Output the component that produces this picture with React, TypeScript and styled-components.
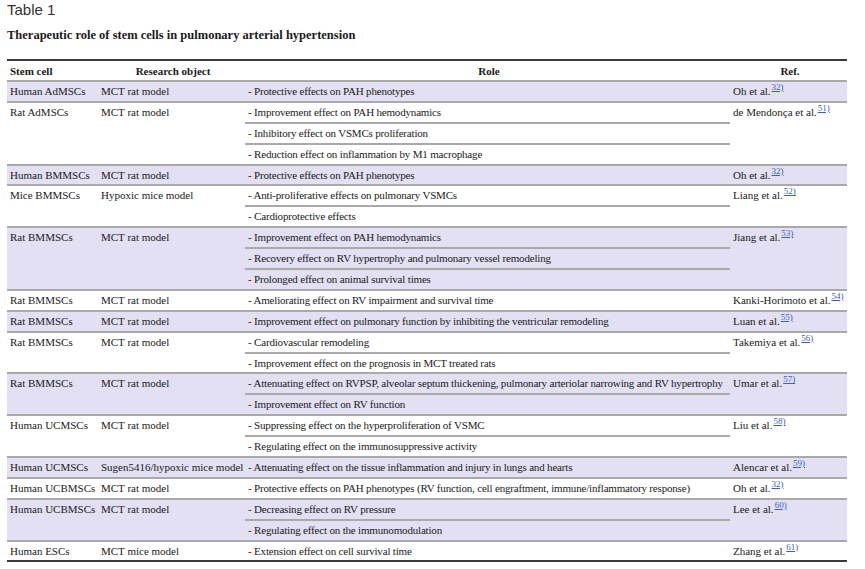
import React from "react";
import styled, { createGlobalStyle } from "styled-components";

const Global = createGlobalStyle`
  html, body { margin: 0; padding: 0; background: #fff; }
  body { font-family: "Liberation Serif", "Times New Roman", serif; color: #1a1a1a; }
`;

const SERIF = `"Liberation Serif", "Times New Roman", serif`;

const Page = styled.div`
  width: 865px;
  height: 569px;
  box-sizing: border-box;
  padding: 1px 18px 0 7px;
  overflow: hidden;
  font-family: ${SERIF};
`;

const Title = styled.h1`
  margin: 0;
  font-family: "Liberation Sans", Arial, sans-serif;
  font-weight: normal;
  font-size: 15px;
  line-height: 17px;
  color: #333;
`;

const Caption = styled.h2`
  margin: 10px 0 0 0;
  font-family: ${SERIF};
  font-weight: bold;
  font-size: 12.5px;
  line-height: 15px;
  color: #1a1a1a;
`;

const Table = styled.div`
  margin-top: 16px;
  width: 840px;
  border-top: 2px solid #3a3a3a;
  border-bottom: 2px solid #3a3a3a;
  font-family: ${SERIF};
  font-size: 11px;
  color: #1a1a1a;
`;

const COLS = "91px 147px 485px 1fr";

const HeadRow = styled.div`
  display: grid;
  grid-template-columns: ${COLS};
  height: 19px;
  border-bottom: 2px solid #a9a9a9;
  font-weight: bold;
  align-items: center;
`;

const HeadCell = styled.div<{ $align?: string }>`
  padding-left: 3px;
  text-align: ${(p) => p.$align || "left"};
  white-space: nowrap;
  font-family: ${SERIF};
`;

const Group = styled.div<{ $shaded: boolean; $last: boolean }>`
  display: grid;
  grid-template-columns: ${COLS};
  background: ${(p) => (p.$shaded ? "#e2e0f2" : "#ffffff")};
  border-bottom: ${(p) => (p.$last ? "none" : "2px solid #a9a9a9")};
`;

const Cell = styled.div`
  padding-left: 3px;
  height: 18.9px;
  line-height: 18.9px;
  white-space: nowrap;
  font-family: ${SERIF};
`;

const RoleList = styled.div`
  display: flex;
  flex-direction: column;
`;

const RoleItem = styled.div`
  padding-left: 3px;
  height: 18.9px;
  line-height: 18.9px;
  white-space: nowrap;
  letter-spacing: -0.18px;
  font-family: ${SERIF};
  &:not(:last-child) {
    border-bottom: 2px solid #a9a9a9;
  }
`;

const Sup = styled.sup`
  font-family: ${SERIF};
  font-size: 9px;
  line-height: 0;
  color: #3a5fbf;
  text-decoration: underline;
  vertical-align: 5px;
  margin-left: 1px;
`;

type Row = {
  cell: string;
  obj: string;
  roles: string[];
  ref: string;
  n: string;
};

const rows: Row[] = [
  { cell: "Human AdMSCs", obj: "MCT rat model", roles: ["Protective effects on PAH phenotypes"], ref: "Oh et al.", n: "32)" },
  {
    cell: "Rat AdMSCs",
    obj: "MCT rat model",
    roles: [
      "Improvement effect on PAH hemodynamics",
      "Inhibitory effect on VSMCs proliferation",
      "Reduction effect on inflammation by M1 macrophage",
    ],
    ref: "de Mendonça et al.",
    n: "51)",
  },
  { cell: "Human BMMSCs", obj: "MCT rat model", roles: ["Protective effects on PAH phenotypes"], ref: "Oh et al.", n: "32)" },
  {
    cell: "Mice BMMSCs",
    obj: "Hypoxic mice model",
    roles: ["Anti-proliferative effects on pulmonary VSMCs", "Cardioprotective effects"],
    ref: "Liang et al.",
    n: "52)",
  },
  {
    cell: "Rat BMMSCs",
    obj: "MCT rat model",
    roles: [
      "Improvement effect on PAH hemodynamics",
      "Recovery effect on RV hypertrophy and pulmonary vessel remodeling",
      "Prolonged effect on animal survival times",
    ],
    ref: "Jiang et al.",
    n: "53)",
  },
  {
    cell: "Rat BMMSCs",
    obj: "MCT rat model",
    roles: ["Ameliorating effect on RV impairment and survival time"],
    ref: "Kanki-Horimoto et al.",
    n: "54)",
  },
  {
    cell: "Rat BMMSCs",
    obj: "MCT rat model",
    roles: ["Improvement effect on pulmonary function by inhibiting the ventricular remodeling"],
    ref: "Luan et al.",
    n: "55)",
  },
  {
    cell: "Rat BMMSCs",
    obj: "MCT rat model",
    roles: ["Cardiovascular remodeling", "Improvement effect on the prognosis in MCT treated rats"],
    ref: "Takemiya et al.",
    n: "56)",
  },
  {
    cell: "Rat BMMSCs",
    obj: "MCT rat model",
    roles: [
      "Attenuating effect on RVPSP, alveolar septum thickening, pulmonary arteriolar narrowing and RV hypertrophy",
      "Improvement effect on RV function",
    ],
    ref: "Umar et al.",
    n: "57)",
  },
  {
    cell: "Human UCMSCs",
    obj: "MCT rat model",
    roles: ["Suppressing effect on the hyperproliferation of VSMC", "Regulating effect on the immunosuppressive activity"],
    ref: "Liu et al.",
    n: "58)",
  },
  {
    cell: "Human UCMSCs",
    obj: "Sugen5416/hypoxic mice model",
    roles: ["Attenuating effect on the tissue inflammation and injury in lungs and hearts"],
    ref: "Alencar et al.",
    n: "59)",
  },
  {
    cell: "Human UCBMSCs",
    obj: "MCT rat model",
    roles: ["Protective effects on PAH phenotypes (RV function, cell engraftment, immune/inflammatory response)"],
    ref: "Oh et al.",
    n: "32)",
  },
  {
    cell: "Human UCBMSCs",
    obj: "MCT rat model",
    roles: ["Decreasing effect on RV pressure", "Regulating effect on the immunomodulation"],
    ref: "Lee et al.",
    n: "60)",
  },
  { cell: "Human ESCs", obj: "MCT mice model", roles: ["Extension effect on cell survival time"], ref: "Zhang et al.", n: "61)" },
];

export default function App() {
  return (
    <>
      <Global />
      <Page>
        <Title>Table 1</Title>
        <Caption>Therapeutic role of stem cells in pulmonary arterial hypertension</Caption>
        <Table>
          <HeadRow>
            <HeadCell>Stem cell</HeadCell>
            <HeadCell $align="center">Research object</HeadCell>
            <HeadCell $align="center">Role</HeadCell>
            <HeadCell $align="center">Ref.</HeadCell>
          </HeadRow>
          {rows.map((r, i) => (
            <Group key={i} $shaded={i % 2 === 0} $last={i === rows.length - 1}>
              <Cell>{r.cell}</Cell>
              <Cell>{r.obj}</Cell>
              <RoleList>
                {r.roles.map((t, j) => (
                  <RoleItem key={j}>- {t}</RoleItem>
                ))}
              </RoleList>
              <Cell>
                {r.ref}
                <Sup>{r.n}</Sup>
              </Cell>
            </Group>
          ))}
        </Table>
      </Page>
    </>
  );
}
